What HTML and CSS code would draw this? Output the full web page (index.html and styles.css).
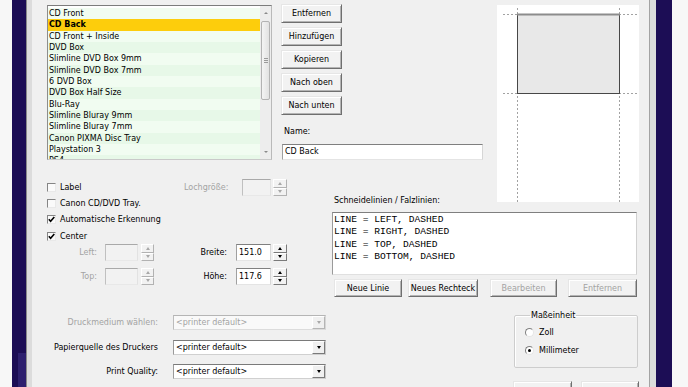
FILE: index.html
```html
<!DOCTYPE html>
<html lang="de">
<head>
  <meta charset="UTF-8">
  <title>Layout bearbeiten</title>
  <link rel="stylesheet" href="styles.css">
</head>
<body>
  <div class="screen">
    <div class="desk desk-left"></div>
    <div class="navy navy-left"><div class="navy-glow"></div></div>
    <div class="frame">
      <div class="dialog">

        <div class="top">
          <div class="listbox">
            <ul class="items">
              <li>CD Front</li>
              <li class="sel">CD Back</li>
              <li>CD Front + Inside</li>
              <li>DVD Box</li>
              <li>Slimline DVD Box 9mm</li>
              <li>Slimline DVD Box 7mm</li>
              <li>6 DVD Box</li>
              <li>DVD Box Half Size</li>
              <li>Blu-Ray</li>
              <li>Slimline Bluray 9mm</li>
              <li>Slimline Bluray 7mm</li>
              <li>Canon PIXMA Disc Tray</li>
              <li>Playstation 3</li>
              <li>PS4</li>
            </ul>
            <div class="vscroll">
              <span class="sb-arrow up"></span>
              <span class="sb-track"><span class="sb-thumb"></span></span>
              <span class="sb-arrow down"></span>
            </div>
          </div>
          <div class="side">
            <button class="btn side-btn">Entfernen</button>
            <button class="btn side-btn">Hinzufügen</button>
            <button class="btn side-btn">Kopieren</button>
            <button class="btn side-btn">Nach oben</button>
            <button class="btn side-btn">Nach unten</button>
            <label class="name-label">Name:</label>
            <div class="edit name-edit">CD Back</div>
          </div>
        </div>

        <div class="preview">
          <svg width="142" height="197" viewBox="0 0 142 197">
            <path d="M6 9.5H141M6 88.5H141M20.5 3V197M122.5 3V197" stroke="#a2a2a2" stroke-dasharray="2 2" fill="none"/>
            <rect x="20.5" y="9.5" width="102" height="79" fill="#e8e8e8" stroke="#474747"/>
            <path d="M20 9.5H123" stroke="#8c8c8c" stroke-width="2"/>
          </svg>
        </div>

        <div class="opts">
          <div class="opts-top">
            <div class="checks">
              <div class="check-row"><span class="check"></span>Label</div>
              <div class="check-row"><span class="check"></span>Canon CD/DVD Tray.</div>
              <div class="check-row"><span class="check"><svg width="7" height="7" viewBox="0 0 7 7"><path d="M0.8 3.2L2.6 5.2L6.3 0.9" stroke="#000" stroke-width="1.6" fill="none"/></svg></span>Automatische Erkennung</div>
              <div class="check-row"><span class="check"><svg width="7" height="7" viewBox="0 0 7 7"><path d="M0.8 3.2L2.6 5.2L6.3 0.9" stroke="#000" stroke-width="1.6" fill="none"/></svg></span>Center</div>
            </div>
            <div class="loch">
              <span class="loch-label off">Lochgröße:</span>
              <span class="edit off loch-edit"></span>
              <span class="spin off"><i class="up"></i><i class="dn"></i></span>
            </div>
          </div>
          <div class="dim-row">
            <span class="dl off">Left:</span>
            <span class="edit off small"></span>
            <span class="spin off narrow"><i class="up"></i><i class="dn"></i></span>
            <span class="dr">Breite:</span>
            <span class="edit mid">151.0</span>
            <span class="spin"><i class="up"></i><i class="dn"></i></span>
          </div>
          <div class="dim-row">
            <span class="dl off">Top:</span>
            <span class="edit off small"></span>
            <span class="spin off narrow"><i class="up"></i><i class="dn"></i></span>
            <span class="dr">Höhe:</span>
            <span class="edit mid">117.6</span>
            <span class="spin"><i class="up"></i><i class="dn"></i></span>
          </div>
        </div>

        <div class="lines-label">Schneidelinien / Falzlinien:</div>
        <div class="lines">
          <div class="memo">LINE = LEFT, DASHED
LINE = RIGHT, DASHED
LINE = TOP, DASHED
LINE = BOTTOM, DASHED</div>
          <div class="line-btns">
            <button class="btn b-line">Neue Linie</button>
            <button class="btn b-rect">Neues Rechteck</button>
            <button class="btn b-edit off">Bearbeiten</button>
            <button class="btn b-del off">Entfernen</button>
          </div>
        </div>

        <div class="print">
          <div class="print-row">
            <span class="plabel off">Druckmedium wählen:</span>
            <div class="select off"><span>&lt;printer default&gt;</span><i class="drop"></i></div>
          </div>
          <div class="print-row">
            <span class="plabel">Papierquelle des Druckers</span>
            <div class="select"><span>&lt;printer default&gt;</span><i class="drop"></i></div>
          </div>
          <div class="print-row">
            <span class="plabel">Print Quality:</span>
            <div class="select"><span>&lt;printer default&gt;</span><i class="drop"></i></div>
          </div>
        </div>

        <div class="unit">
          <fieldset class="units">
            <legend>Maßeinheit</legend>
            <div class="radio-row"><span class="radio"></span>Zoll</div>
            <div class="radio-row"><span class="radio on"></span>Millimeter</div>
          </fieldset>
          <div class="ok-btns">
            <button class="btn ok" aria-label="OK"></button>
            <button class="btn ok" aria-label="Abbrechen"></button>
          </div>
        </div>

      </div>
    </div>
    <div class="navy navy-right"></div>
    <div class="desk desk-right"></div>
  </div>
</body>
</html>
```

FILE: styles.css
```css
body {
  margin: 0;
  width: 688px;
  height: 387px;
  overflow: hidden;
  font: 8px/11px "DejaVu Sans", sans-serif;
  color: #000;
  background: #f7f7f7;
}
.screen {
  display: flex;
  height: 387px;
}
.desk {
  background: #f7f7f7;
}
.desk-left {
  width: 12px;
}
.desk-right {
  width: 16px;
}
.navy {
  background: #1c0d55;
}
.navy-left {
  width: 14px;
  display: flex;
  flex-direction: column;
  justify-content: flex-end;
}
.navy-glow {
  height: 34px;
  margin-left: 6px;
  background: #2d1f6e;
}
.navy-right {
  width: 16px;
}
.frame {
  display: flex;
  background: #dcdcdc;
  border-left: 1px solid #8a8a8a;
  padding: 0 6px 0 5px;
}

/* dialog */
.dialog {
  width: 618px;
  height: 387px;
  box-sizing: border-box;
  background: #f0f0f0;
  border-right: 1px solid #a3a3a3;
  padding: 0 10px 0 15px;
  display: grid;
  grid-template-columns: 285px 165px 142px;
  grid-template-rows: 178px 28px 94px 1fr;
  grid-template-areas:
    "top top prev"
    "opts lbl prev"
    "opts lines lines"
    "print print unit";
  overflow: hidden;
}
.off {
  color: #a3a3a3;
}
.btn {
  box-sizing: border-box;
  padding: 0;
  font: inherit;
  color: #000;
  background: #f2f2f2;
  border: 1px solid;
  border-color: #e6e6e6 #6f6f6f #6f6f6f #e6e6e6;
  box-shadow: inset 1px 1px 0 #fff, inset -1px -1px 0 #b4b4b4;
  white-space: nowrap;
}
.btn.off {
  color: #a3a3a3;
}
.edit {
  box-sizing: border-box;
  height: 17px;
  border: 1px solid;
  border-color: #7f7f7f #d6d6d6 #e4e4e4 #a0a0a0;
  background: #fff;
  padding-left: 2px;
  line-height: 15px;
}
.edit.off {
  background: #f2f2f2;
  border-color: #a9a9a9 #e2e2e2 #e8e8e8 #c0c0c0;
}

/* top: list, buttons, name */
.top {
  grid-area: top;
  display: flex;
  align-items: flex-start;
  padding-top: 5px;
}
.listbox {
  width: 225px;
  height: 155px;
  box-sizing: border-box;
  border: 1px solid;
  border-color: #7c7c7c #b9b9b9 #c9c9c9 #8c8c8c;
  background: #fff;
  display: flex;
}
.items {
  list-style: none;
  margin: 0;
  padding: 2px 0 0;
  flex: 1;
  overflow: hidden;
}
.items li {
  height: 11.33px;
  line-height: 11.33px;
  padding-left: 1px;
  white-space: nowrap;
  background: #f1fcf1;
}
.items li:nth-child(even) {
  background: #e7f8e8;
}
.items li.sel {
  background: #fdcd0c;
  font-weight: bold;
}
.vscroll {
  width: 11px;
  display: flex;
  flex-direction: column;
  background: #ededed;
}
.sb-arrow {
  height: 14px;
  display: flex;
  align-items: center;
  justify-content: center;
}
.sb-arrow::after {
  content: "";
  border-left: 2px solid transparent;
  border-right: 2px solid transparent;
}
.sb-arrow.up::after {
  border-bottom: 2px solid #8a8a8a;
}
.sb-arrow.down::after {
  border-top: 2px solid #8a8a8a;
}
.sb-track {
  flex: 1;
  padding-top: 1px;
}
.sb-thumb {
  height: 79px;
  margin: 0 1px;
  box-sizing: border-box;
  border: 1px solid #b3b3b3;
  border-radius: 2px;
  background: linear-gradient(90deg, #f4f4f4, #e2e2e2);
  display: flex;
  align-items: center;
  justify-content: center;
}
.sb-thumb::after {
  content: "";
  width: 4px;
  height: 5px;
  background: repeating-linear-gradient(#9a9a9a 0 1px, transparent 1px 2px);
}
.side {
  margin: -1px 0 0 9px;
  width: 202px;
  display: flex;
  flex-direction: column;
  align-items: flex-start;
}
.side-btn {
  width: 61px;
  height: 19px;
  margin-bottom: 4px;
}
.name-label {
  margin: 7px 0 0 3px;
}
.name-edit {
  margin: 7px 0 0 1px;
  width: 201px;
  height: 16px;
  line-height: 14px;
}

/* preview */
.preview {
  grid-area: prev;
  margin-top: 5px;
  height: 197px;
  background: #fff;
}
.preview svg {
  display: block;
}

/* options */
.opts {
  grid-area: opts;
}
.opts-top {
  display: flex;
  align-items: flex-start;
}
.checks {
  width: 137px;
  padding-top: 1px;
}
.check-row {
  height: 16.3px;
  display: flex;
  align-items: center;
  white-space: nowrap;
}
.check {
  width: 9px;
  height: 9px;
  box-sizing: border-box;
  border: 1px solid;
  border-color: #858585 #e9e9e9 #e9e9e9 #858585;
  background: #fafafa;
  margin-right: 4px;
  display: flex;
  align-items: center;
  justify-content: center;
}
.check svg {
  display: block;
}
.loch {
  margin-top: 1px;
  display: flex;
  align-items: center;
}
.loch-label {
  width: 58px;
}
.loch-edit {
  width: 29px;
}
.spin {
  width: 14px;
  height: 17px;
  margin-left: 2px;
  display: flex;
  flex-direction: column;
}
.spin.narrow {
  width: 13px;
  margin-left: 3px;
}
.spin i {
  flex: 1;
  box-sizing: border-box;
  background: #f2f2f2;
  border: 1px solid;
  border-color: #fff #7a7a7a #7a7a7a #fff;
  display: flex;
  align-items: center;
  justify-content: center;
}
.spin i::after {
  content: "";
  border-left: 2.5px solid transparent;
  border-right: 2.5px solid transparent;
}
.spin i.up::after {
  border-bottom: 3px solid #000;
}
.spin i.dn::after {
  border-top: 3px solid #000;
}
.spin.off i {
  border-color: #fff #b2b2b2 #b2b2b2 #fff;
}
.spin.off i.up::after {
  border-bottom-color: #a8a8a8;
}
.spin.off i.dn::after {
  border-top-color: #a8a8a8;
}
.dim-row {
  display: flex;
  align-items: center;
  height: 17px;
}
.dim-row + .dim-row {
  margin-top: 7px;
}
.dl {
  width: 50px;
  text-align: right;
  margin-right: 8px;
}
.edit.small {
  width: 33px;
}
.dr {
  width: 73px;
  text-align: right;
  margin-right: 9px;
}
.edit.mid {
  width: 35px;
}

/* cut / fold lines */
.lines-label {
  grid-area: lbl;
  align-self: end;
  margin-left: 2px;
  white-space: nowrap;
}
.lines {
  grid-area: lines;
}
.memo {
  margin-top: 6px;
  width: 305px;
  height: 63px;
  box-sizing: border-box;
  border: 1px solid;
  border-color: #7f7f7f #d0d0d0 #e0e0e0 #9a9a9a;
  background: #fff;
  padding: 1px 0 0 1px;
  font: 9.6px/12.3px "Liberation Mono", monospace;
  white-space: pre;
}
.line-btns {
  display: flex;
  margin-top: 4px;
}
.line-btns .btn {
  height: 18px;
}
.b-line {
  width: 68px;
  margin-left: 2px;
}
.b-rect {
  width: 70px;
  margin-left: 6px;
}
.b-edit {
  width: 67px;
  margin-left: 12px;
}
.b-del {
  width: 69px;
  margin-left: 11px;
}

/* printer */
.print {
  grid-area: print;
  padding-top: 15px;
}
.print-row {
  display: flex;
  align-items: center;
  height: 15px;
}
.print-row + .print-row {
  margin-top: 9.5px;
}
.plabel {
  width: 111px;
  text-align: right;
  margin-right: 15px;
  white-space: nowrap;
}
.select {
  width: 153px;
  height: 15px;
  box-sizing: border-box;
  border: 1px solid;
  border-color: #7a7a7a #c8c8c8 #d0d0d0 #9a9a9a;
  background: #fff;
  display: flex;
  align-items: center;
}
.select span {
  flex: 1;
  padding-left: 2px;
}
.drop {
  width: 13px;
  height: 13px;
  box-sizing: border-box;
  border: 1px solid;
  border-color: #fff #7a7a7a #7a7a7a #fff;
  background: #f0f0f0;
  display: flex;
  align-items: center;
  justify-content: center;
}
.drop::after {
  content: "";
  border-left: 2.5px solid transparent;
  border-right: 2.5px solid transparent;
  border-top: 3px solid #000;
}
.select.off {
  background: #f9f9f9;
  border-color: #b5b5b5 #d6d6d6 #dcdcdc #bcbcbc;
}
.select.off .drop {
  border-color: #fff #b5b5b5 #b5b5b5 #fff;
}
.select.off .drop::after {
  border-top-color: #a8a8a8;
}

/* units + dialog buttons */
.unit {
  grid-area: unit;
  padding-left: 17px;
}
.units {
  margin: 9.5px 0 0;
  padding: 5px 0 9px 10px;
  width: 124px;
  box-sizing: border-box;
  border: 1px solid #cdcdcd;
  border-radius: 2px;
  box-shadow: inset 1px 1px 0 #fff;
}
.units legend {
  padding: 0 1px;
  margin-left: 5px;
}
.radio-row {
  display: flex;
  align-items: center;
  height: 14px;
}
.radio-row + .radio-row {
  margin-top: 4px;
}
.radio {
  width: 9px;
  height: 9px;
  box-sizing: border-box;
  border-radius: 50%;
  border: 1px solid;
  border-color: #808080 #e6e6e6 #e6e6e6 #808080;
  background: #fff;
  margin-right: 5px;
  display: flex;
  align-items: center;
  justify-content: center;
}
.radio.on::after {
  content: "";
  width: 3px;
  height: 3px;
  border-radius: 50%;
  background: #000;
}
.ok-btns {
  display: flex;
  gap: 9px;
  margin: 13px 0 0 -1px;
}
.ok {
  width: 59px;
  height: 21px;
}
```
